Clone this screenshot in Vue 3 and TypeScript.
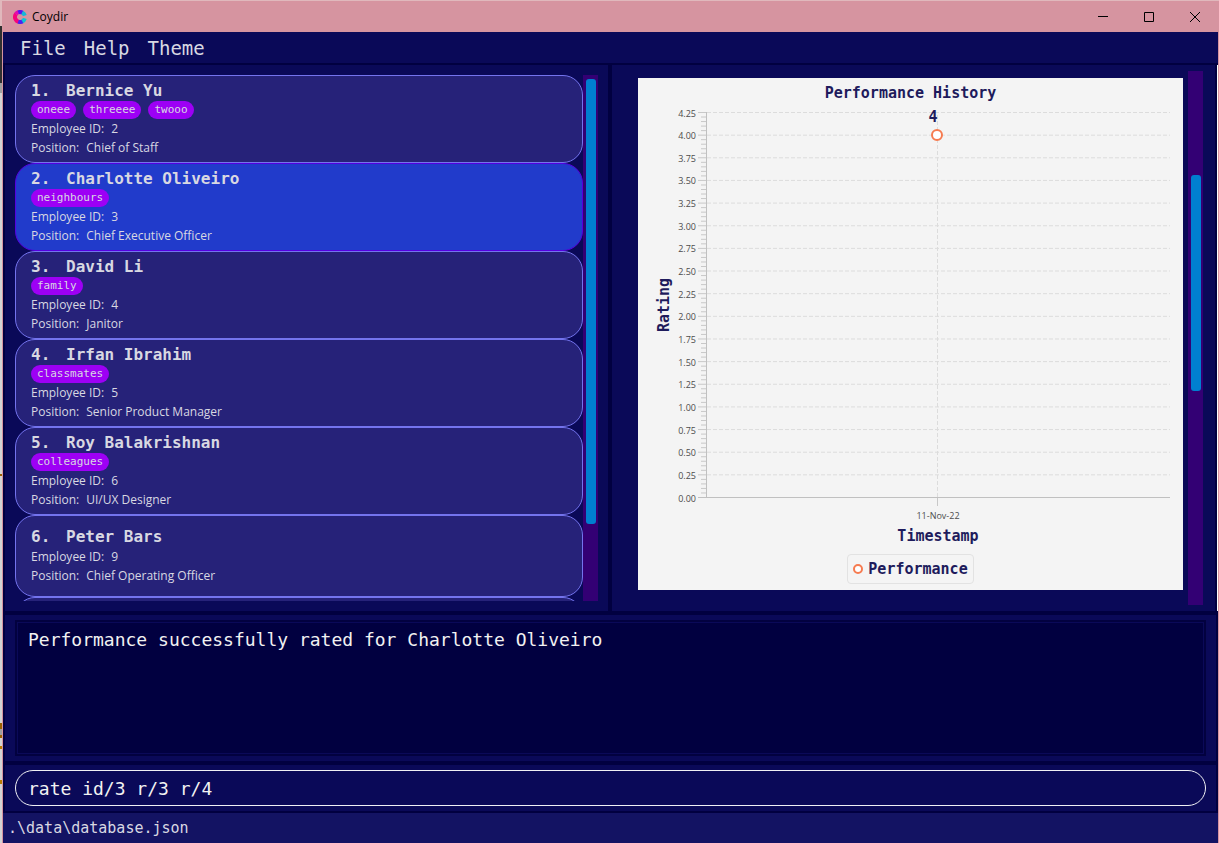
<script setup lang="ts">
import { ref } from 'vue'

interface Employee {
  name: string
  id: number
  position: string
  tags: string[]
}

const employees: Employee[] = [
  { name: 'Bernice Yu', id: 2, position: 'Chief of Staff', tags: ['oneee', 'threeee', 'twooo'] },
  { name: 'Charlotte Oliveiro', id: 3, position: 'Chief Executive Officer', tags: ['neighbours'] },
  { name: 'David Li', id: 4, position: 'Janitor', tags: ['family'] },
  { name: 'Irfan Ibrahim', id: 5, position: 'Senior Product Manager', tags: ['classmates'] },
  { name: 'Roy Balakrishnan', id: 6, position: 'UI/UX Designer', tags: ['colleagues'] },
  { name: 'Peter Bars', id: 9, position: 'Chief Operating Officer', tags: [] },
]

const menus = ['File', 'Help', 'Theme']
const selectedId = ref(3)
const result = ref('Performance successfully rated for Charlotte Oliveiro')
const command = ref('rate id/3 r/3 r/4')

const plot = { left: 68, right: 531, top: 4, bottom: 389, max: 4.25 }
const yOf = (v: number): number => plot.bottom + 0.5 - (v / plot.max) * (plot.bottom - plot.top)
const majors = Array.from({ length: 18 }, (_, i) => ({ label: (i * 0.25).toFixed(2), y: yOf(i * 0.25) }))
const minors = Array.from({ length: 85 }, (_, i) => i)
  .filter((i) => i % 5 !== 0)
  .map((i) => yOf(i * 0.05))
const minorPath = minors.map((y) => `M63 ${y}H68`).join('')
const majorPath = majors.map((m) => `M60 ${m.y}H68`).join('')
const gridPath = majors
  .slice(1)
  .map((m) => `M69 ${m.y}H532`)
  .join('')
</script>

<template>
  <div class="desktop">
    <div class="window">
      <header class="titlebar">
        <svg class="logo" width="14" height="14" viewBox="0 0 14 14" fill="none" stroke-width="4">
          <path d="M6 11.9A5 5 0 0 1 3 4" stroke="#f5057c" />
          <path d="M2.8 4.2A5 5 0 0 1 5.5 2.2" stroke="#e00bb0" />
          <path d="M5.2 2.3A5 5 0 0 1 9.5 2.7" stroke="#5a10f0" />
          <path d="M9.2 2.5A5 5 0 0 1 11.8 5.6" stroke="#12b8d8" />
          <path d="M11.8 8.4A5 5 0 0 1 9 11.6" stroke="#0cc4d4" />
          <path d="M9.4 11.4A5 5 0 0 1 5.2 11.7" stroke="#4a22f0" />
        </svg>
        <span class="app-name">Coydir</span>
        <div class="controls">
          <button type="button" aria-label="Minimize">
            <svg width="12" height="12" viewBox="0 0 12 12"><path d="M1 5.5H11" stroke="#000" /></svg>
          </button>
          <button type="button" aria-label="Maximize">
            <svg width="12" height="12" viewBox="0 0 12 12"><path d="M1.5 1.5H10.5V10.5H1.5Z" fill="none" stroke="#000" /></svg>
          </button>
          <button type="button" aria-label="Close">
            <svg width="12" height="12" viewBox="0 0 12 12"><path d="M1 1L11 11M11 1L1 11" stroke="#000" /></svg>
          </button>
        </div>
      </header>

      <nav class="menu">
        <button v-for="m in menus" :key="m" type="button">{{ m }}</button>
      </nav>

      <main class="panes">
        <section class="pane people">
          <ul class="cards">
            <li
              v-for="(e, i) in employees"
              :key="e.id"
              class="card"
              :class="{ selected: e.id === selectedId }"
              @click="selectedId = e.id"
            >
              <h2><span class="index">{{ i + 1 }}.</span>{{ e.name }}</h2>
              <div v-if="e.tags.length" class="tags">
                <span v-for="t in e.tags" :key="t" class="tag">{{ t }}</span>
              </div>
              <p><span class="key">Employee ID:</span>{{ e.id }}</p>
              <p><span class="key">Position:</span>{{ e.position }}</p>
            </li>
            <li class="card"></li>
          </ul>
          <div class="track"><div class="thumb thumb-list"></div></div>
        </section>

        <section class="pane details">
          <figure class="chart">
            <figcaption>Performance History</figcaption>
            <svg class="plot" viewBox="0 0 545 416">
              <path :d="gridPath" class="grid" />
              <path d="M299.5 389V4" class="grid" />
              <path :d="minorPath" class="minor" />
              <path :d="majorPath" class="major" />
              <path d="M68.5 4V390M60 389.5H532" class="axis" />
              <path d="M299.5 390V398" class="minor" />
              <text v-for="m in majors" :key="m.label" x="58" :y="m.y + 4" class="tick" text-anchor="end">{{ m.label }}</text>
              <text x="300" y="411" class="tick" text-anchor="middle">11-Nov-22</text>
              <text class="label" transform="translate(31 197) rotate(-90)" text-anchor="middle">Rating</text>
              <text x="295" y="14" class="label" text-anchor="middle">4</text>
              <circle cx="299" cy="27" r="5" fill="#fff" stroke="#f67b50" stroke-width="2" />
            </svg>
            <div class="x-title">Timestamp</div>
            <div class="legend">
              <svg width="12" height="12" viewBox="0 0 12 12">
                <circle cx="6" cy="6" r="4" fill="#fff" stroke="#f67b50" stroke-width="2" />
              </svg>
              Performance
            </div>
          </figure>
          <div class="track"><div class="thumb thumb-details"></div></div>
        </section>
      </main>

      <section class="result">
        <textarea v-model="result" readonly aria-label="Result"></textarea>
      </section>

      <section class="command">
        <input v-model="command" type="text" aria-label="Command" spellcheck="false" />
      </section>

      <footer class="status">.\data\database.json</footer>
    </div>
  </div>
</template>

<style>
body {
  margin: 0;
  background: #d4d4d4;
}
</style>

<style scoped>
* {
  box-sizing: border-box;
}

.desktop {
  height: 100vh;
  min-height: 600px;
  padding: 1px 0 0 2px;
  overflow: hidden;
  background: linear-gradient(#e0b8bc 0 26px, #303030 26px 83px, #a0a0a0 83px 93px, #d4d4d4 93px 474px, #9a6200 474px 476px, #d4d4d4 476px 723px, #9a6200 723px 729px, #a0a0a0 729px 735px, #9a6200 735px 738px, #d4d4d4 738px 746px, #b87c00 746px 749px, #d4d4d4 749px 780px, #b87c00 780px 784px, #d4d4d4 784px);
}

.window {
  height: 100%;
  display: flex;
  flex-direction: column;
  border: solid #d694a0;
  border-width: 0 1px;
  background: #010040;
  color: #d8d8e2;
  font-family: "DejaVu Sans Mono", monospace;
}

button {
  border: 0;
  padding: 0;
  background: none;
  color: inherit;
  font: inherit;
}

.titlebar {
  height: 31px;
  flex: none;
  display: flex;
  align-items: center;
  padding-left: 10px;
  background: #d694a0;
  color: #000;
  font: 12px "Open Sans", sans-serif;
}

.app-name {
  margin-left: 5px;
}

.controls {
  height: 100%;
  display: flex;
  margin-left: auto;
}

.controls button {
  width: 46px;
  display: grid;
  place-items: center;
}

.menu {
  height: 31px;
  flex: none;
  display: flex;
  padding-left: 8px;
  margin-bottom: 2px;
  background: #0a0958;
  font-size: 19px;
}

.menu button {
  padding: 0 9px;
}

.panes {
  flex: 1;
  min-height: 0;
  display: grid;
  grid-template-columns: minmax(0, 1fr) minmax(0, 1fr);
  grid-template-rows: minmax(0, 1fr);
  gap: 4px;
  padding: 0 2px;
  border-right: 1px solid #fff;
}

.pane {
  display: flex;
  background: #0a0958;
}

.people {
  padding: 10px;
}

.details {
  padding: 6px 12px 6px 26px;
}

.cards {
  flex: 1;
  margin: 0;
  padding: 0;
  overflow: hidden;
  list-style: none;
}

.card {
  min-height: 82px;
  display: flex;
  flex-direction: column;
  justify-content: center;
  padding: 5px 15px;
  border: 1px solid #7474ee;
  border-radius: 20px;
  background: #262279;
  font: 12px "Open Sans", sans-serif;
}

.card.selected {
  background: #213bcb;
  border-color: #5500e0;
}

.card h2 {
  margin: 0;
  font: bold 16px/20px "DejaVu Sans Mono", monospace;
}

.index {
  display: inline-block;
  width: 35px;
}

.tags {
  display: flex;
  gap: 7px;
}

.tag {
  padding: 0 6px;
  border-radius: 9px;
  background: #9d00f5;
  font: 11px/18px "DejaVu Sans Mono", monospace;
}

.card p {
  margin: 0;
  line-height: 19px;
}

.key {
  margin-right: 7px;
}

.track {
  width: 15px;
  flex: none;
  padding: 4px 2px 4px 3px;
  background: #330074;
}

.thumb {
  width: 10px;
  border-radius: 3px;
  background: #007fd0;
}

.thumb-list {
  height: 86%;
}

.thumb-details {
  height: 41%;
  margin-top: 100px;
}

.chart {
  flex: 1;
  min-width: 0;
  margin: 7px 5px 15px 0;
  background: #f4f4f4;
  color: #1e1b5c;
  font-size: 15px;
  font-weight: bold;
  text-align: center;
}

.chart figcaption {
  line-height: 30px;
}

.plot {
  display: block;
  width: 100%;
  overflow: visible;
}

.grid {
  fill: none;
  stroke: #dcdcdc;
  stroke-dasharray: 4 2;
}

.axis {
  fill: none;
  stroke: #c0c0c0;
}

.major,
.minor {
  stroke: #c8c8c8;
}

.tick {
  fill: #4c4c4c;
  font: 9px "Open Sans", sans-serif;
}

.label {
  fill: #1e1b5c;
}

.x-title {
  padding-left: 55px;
  line-height: 24px;
}

.legend {
  width: fit-content;
  height: 30px;
  display: flex;
  align-items: center;
  gap: 4px;
  margin: 6px auto 0;
  padding: 0 5px 0 4px;
  border: 1px solid #e2e2e2;
  border-radius: 4px;
}

.result {
  height: 146px;
  flex: none;
  margin: 4px 2px;
  padding: 5px 10px;
  background: #0a0958;
}

.result textarea {
  display: block;
  width: 100%;
  height: 100%;
  padding: 8px 11px;
  border: 2px solid #02013f;
  outline: 1px solid #0a0958;
  outline-offset: -3px;
  background: #010040;
  color: #f2f2f2;
  font: 18px/20px "DejaVu Sans Mono", monospace;
  resize: none;
}

.command {
  height: 46px;
  flex: none;
  margin: 0 2px 2px;
  padding: 5px 10px;
  background: #0a0958;
}

.command input {
  display: block;
  width: 100%;
  height: 100%;
  padding: 0 12px;
  border: 1px solid #f0f0f5;
  border-radius: 18px;
  background: none;
  color: #f2f2f2;
  font: 18px "DejaVu Sans Mono", monospace;
}

.status {
  flex: none;
  padding-left: 5px;
  background: #131363;
  font-size: 15px;
  line-height: 30px;
}
</style>
